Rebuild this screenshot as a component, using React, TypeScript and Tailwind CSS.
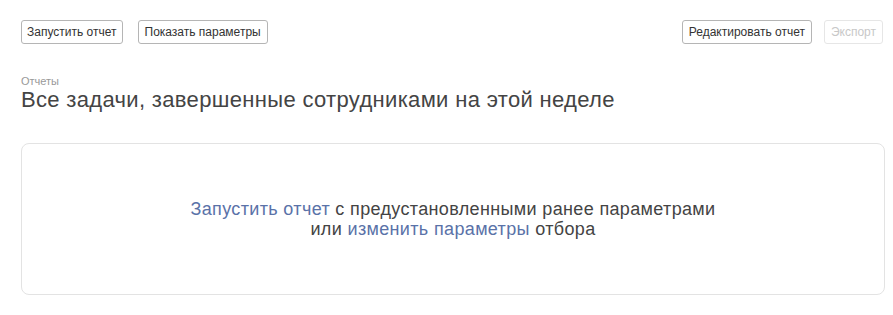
export default function App() {
  return (
    <div className="min-h-[315px] bg-white pl-[21px] pr-[8px] pt-[20px] font-['Liberation_Sans',Arial,sans-serif] text-[#333]">
      <div className="flex items-center justify-between">
        <div className="flex gap-[15px]">
          <button className="h-[24px] rounded-[3px] border border-[#b5b5b5] bg-white px-[5px] text-[12px] text-[#333]">
            Запустить отчет
          </button>
          <button className="h-[24px] rounded-[3px] border border-[#b5b5b5] bg-white px-[6px] text-[12px] text-[#333]">
            Показать параметры
          </button>
        </div>
        <div className="mr-[2px] flex gap-[12px]">
          <button className="h-[24px] rounded-[3px] border border-[#b5b5b5] bg-white px-[6px] text-[12px] text-[#333]">
            Редактировать отчет
          </button>
          <button className="h-[24px] rounded-[3px] border border-[#e6e6e6] bg-white px-[6px] text-[12px] text-[#c8c8c8]" disabled>
            Экспорт
          </button>
        </div>
      </div>

      <div className="mt-[31px] text-[11px] leading-[12px] text-[#999]">Отчеты</div>
      <h1 className="text-[22px] leading-[26px] tracking-[0.33px] text-[#444]">
        Все задачи, завершенные сотрудниками на этой неделе
      </h1>

      <div className="mt-[30px] flex h-[152px] flex-col items-center justify-center rounded-[8px] border border-[#e3e3e3] text-center text-[18px] leading-[20px] tracking-[0.35px] text-[#444]">
        <p>
          <a className="text-[#5a72a8]">Запустить отчет</a> с предустановленными ранее параметрами
        </p>
        <p>
          или <a className="text-[#5a72a8]">изменить параметры</a> отбора
        </p>
      </div>
    </div>
  );
}
